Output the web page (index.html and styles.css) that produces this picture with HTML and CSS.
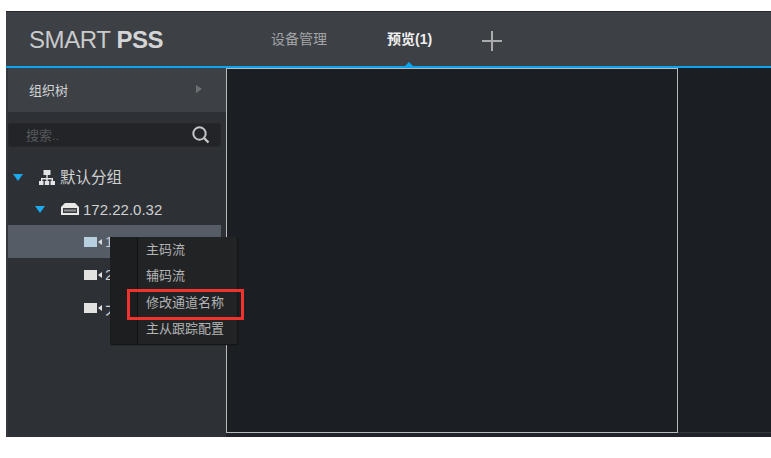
FILE: index.html
```html
<!DOCTYPE html>
<html lang="zh-CN">
<head>
<meta charset="utf-8">
<title>SMART PSS</title>
<link rel="stylesheet" href="styles.css">
</head>
<body>
<div class="app">
  <header class="topbar">
    <div class="logo">SMART <b>PSS</b></div>
    <nav class="tabs">
      <span class="tab">设备管理</span>
      <span class="tab active">预览(1)</span>
      <svg class="plus" width="20" height="20" viewBox="0 0 20 20"><path d="M10 0v20M0 10h20" stroke="#a9abad" stroke-width="2" fill="none"/></svg>
    </nav>
    <i class="caret"></i>
  </header>
  <main class="body">
    <aside class="side">
      <div class="side-head"><span>组织树</span><i class="arrow"></i></div>
      <div class="search">
        <span>搜索..</span>
        <svg width="19" height="19" viewBox="0 0 19 19"><circle cx="8.5" cy="8.5" r="6.2" stroke="#c4c6c8" stroke-width="2" fill="none"/><path d="M13 13l4.5 4.5" stroke="#c4c6c8" stroke-width="2.4"/></svg>
      </div>
      <ul class="tree">
        <li class="node lv0">
          <i class="tri"></i>
          <svg class="ico-org" width="16" height="15" viewBox="0 0 16 15"><path d="M4.500 0h7v5h-7zM7.300 5h1.400v3H14v3h-1.400V9.400H8.700V11H7.300V9.400H3.400V11H2V8h5.300zM0 11h4.500v4H0zM5.800 11h4.400v4H5.800zM11.500 11H16v4h-4.500z" fill="#e2e3e4"/></svg>
          <span>默认分组</span>
        </li>
        <li class="node lv1">
          <i class="tri"></i>
          <svg class="ico-dev" width="18" height="12" viewBox="0 0 18 12"><path d="M4 0h10l4 4v8H0V4z" fill="#e8e8e6"/><path d="M2 5h14v5H2z" fill="#3a3d41"/><path d="M3 6.500h12v2H3z" fill="#8d8f90"/></svg>
          <span>172.22.0.32</span>
        </li>
        <li class="node lv2 selected"><svg class="ico-cam" width="18" height="10" viewBox="0 0 18 10"><path d="M0 0h13v10H0z" fill="#b8cfe0"/><path d="M14 5l4-3v6z" fill="#d8dde0"/></svg><span>1</span></li>
        <li class="node lv2"><svg class="ico-cam" width="18" height="10" viewBox="0 0 18 10"><path d="M0 0h13v10H0z" fill="#e2e2e0"/><path d="M14 5l4-3v6z" fill="#e2e2e0"/></svg><span>2</span></li>
        <li class="node lv2"><svg class="ico-cam" width="18" height="10" viewBox="0 0 18 10"><path d="M0 0h13v10H0z" fill="#e2e2e0"/><path d="M14 5l4-3v6z" fill="#e2e2e0"/></svg><span>大</span></li>
      </ul>
    </aside>
    <section class="stage">
      <div class="pane"></div>
      <div class="rest"></div>
    </section>
  </main>
  <ul class="menu">
    <li>主码流</li>
    <li>辅码流</li>
    <li class="marked">修改通道名称</li>
    <li>主从跟踪配置</li>
  </ul>
</div>
</body>
</html>
```
FILE: styles.css
```css
* { box-sizing: border-box; }
html, body { margin: 0; padding: 0; background: #fff; }
body { width: 771px; height: 458px; padding: 11px 0 0 6px; overflow: hidden;
  font-family: "Liberation Sans", "Noto Sans CJK SC", sans-serif; }
.app { position: relative; width: 765px; height: 426px; display: flex; flex-direction: column; background: #2d3034; border-left: 2px solid #33363a; }
.topbar { position: relative; height: 57px; flex: none; display: flex; background: #3d4045; border-top: 1px solid #26282b; border-bottom: 2px solid #0aa5ee; margin-left: -2px; }
.logo { width: 245px; padding: 14px 0 0 23px; font-size: 24px; line-height: 27px; letter-spacing: -0.4px; color: #c9cacb; }
.logo b { color: #d4d5d6; }
.tabs { display: flex; align-items: flex-start; padding-top: 17px; font-size: 14px; line-height: 20px; color: #a4a6a8; }
.tab { width: 117px; padding-left: 20px; color: #a2a4a6; }
.tab.active { width: 114px; color: #f0f0f0; padding-left: 19px; font-weight: bold; }
.plus { margin-top: 2px; }
.caret { position: absolute; left: 399px; bottom: 0; border: 4px solid transparent; border-top: 0; border-bottom: 4px solid #0aa5ee; }
.body { flex: 1; display: flex; min-height: 0; }
.side { width: 218px; flex: none; background: #2d3034; }
.side-head { height: 44px; background: #3d4045; display: flex; align-items: center; justify-content: space-between; padding: 0 24px 2px 21px; font-size: 13px; color: #d2d3d4; }
.arrow { border: 4.500px solid transparent; border-left: 6px solid #6d7073; border-right: 0; }
.search { width: 213px; height: 24px; margin: 11px 0 0 0; padding: 0 10px 2px 17px; border: 1px solid #26282b; border-radius: 3px; background: #222428; display: flex; align-items: center; justify-content: space-between; font-size: 13px; color: #55585b; }
.tree { list-style: none; margin: 14px 0 0; padding: 0; }
.node { width: 213px; height: 33px; display: flex; align-items: center; font-size: 15px; color: #cfd0d1; }
.lv0 { padding-left: 5px; height: 32px; }
.lv1 { padding-left: 27px; height: 32px; }
.lv1 span { margin-left: 4px; }
.lv0 span { margin-left: 5px; font-size: 15.5px; position: relative; top: -1px; }
.lv2 { padding-left: 76px; }
.lv2 span { margin-left: 3px; }
.selected { background: #565c65; }
.tri { border: 5px solid transparent; border-top: 7px solid #1da9ef; border-bottom: 0; border-left-width: 5.500px; border-right-width: 5.500px; margin-right: 16px; }
.lv1 .tri { margin-right: 16px; }
.stage { flex: 1; display: flex; background: #20232a; padding-bottom: 4px; position: relative; }
.pane { width: 452px; flex: none; border: 1px solid #b8babb; background: #1b1e22; }
.rest { flex: 1; background: #1b1e22; border-bottom: 1px solid #33363a; }
.menu { position: absolute; left: 102px; top: 226px; width: 127px; height: 107px; margin: 0; padding: 0 0 0 28px; list-style: none; background: linear-gradient(90deg, #1c1e20 27px, #0f1012 27px, #0f1012 28px, #212325 28px); box-shadow: 1px 1px 1px #141517; font-size: 13px; color: #b3b4b5; }
.menu li { position: relative; height: 26.330px; line-height: 26px; padding-left: 8px; white-space: nowrap; }
.menu .marked::after { content: ""; box-sizing: border-box; position: absolute; left: -11px; top: -1px; width: 117px; height: 31px; border: 3px solid #f2322e; }
```
